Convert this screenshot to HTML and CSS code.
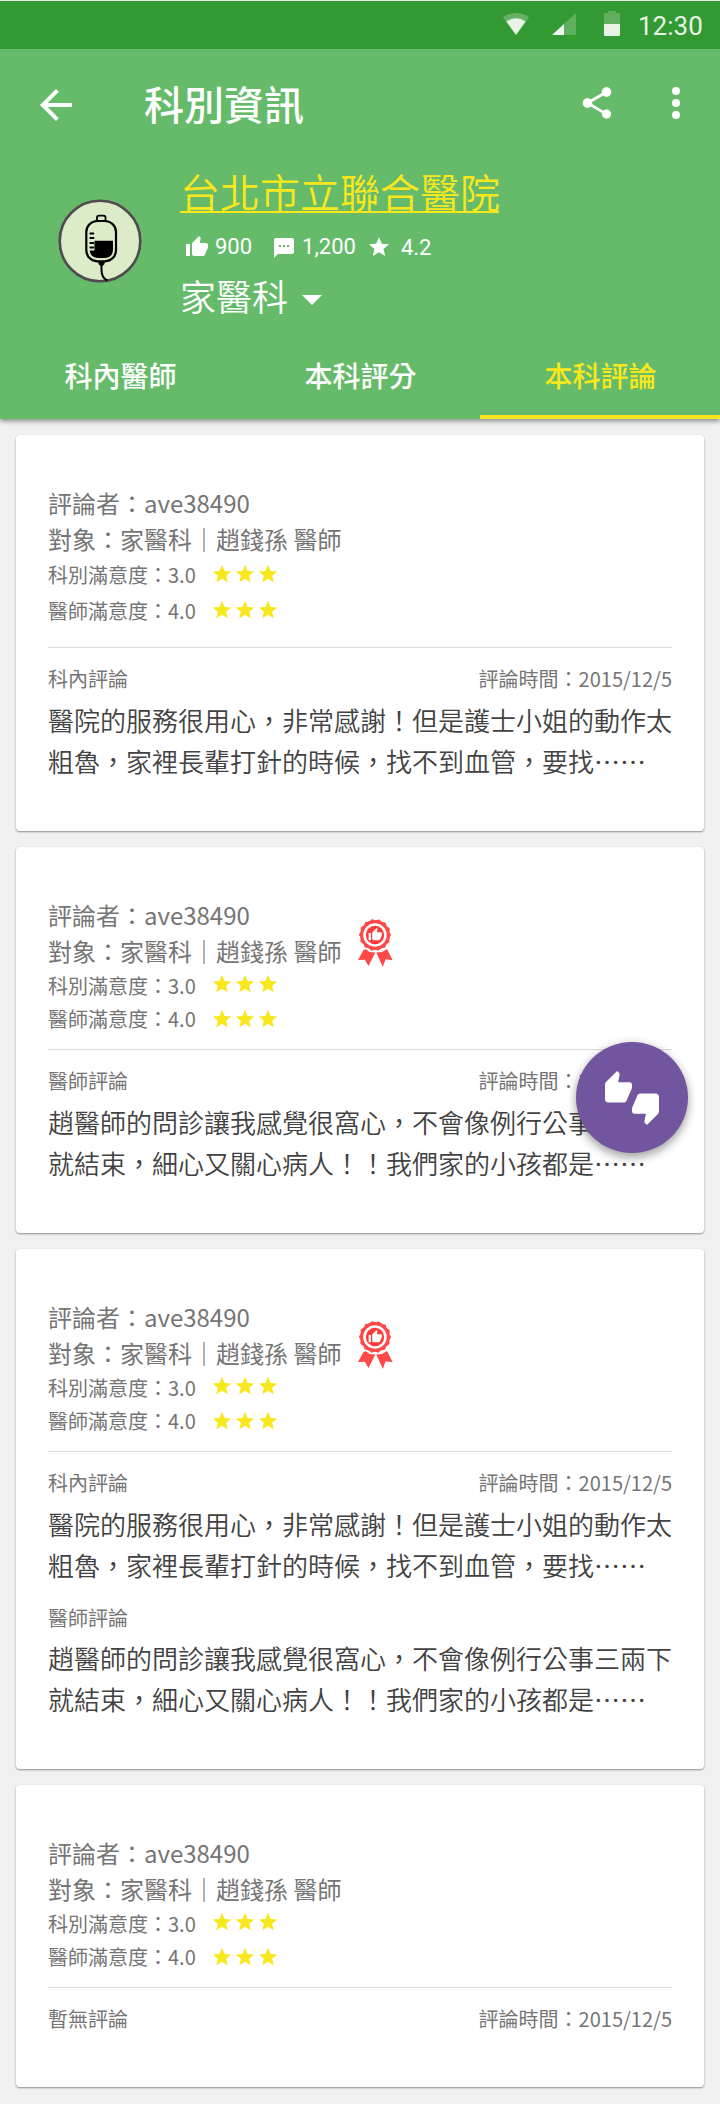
FILE: index.html
```
<!DOCTYPE html>
<html lang="zh-Hant">
<head>
<meta charset="utf-8">
<title>科別資訊</title>
<link rel="stylesheet" href="styles.css">
</head>
<body>
<svg class="defs" width="0" height="0" aria-hidden="true">
  <symbol id="star" viewBox="0 0 24 24"><path d="M12 17.27L18.18 21l-1.64-7.03L22 9.24l-7.19-.61L12 2 9.19 8.63 2 9.24l5.46 4.73L5.82 21z"/></symbol>
  <symbol id="thumb" viewBox="0 0 24 24"><path d="M1 21h4V9H1v12zm22-11c0-1.100-.9-2-2-2h-6.310l.95-4.570.030-.320c0-.410-.170-.790-.440-1.060L14.170 1 7.590 7.590C7.220 7.950 7 8.450 7 9v10c0 1.100.9 2 2 2h9c.830 0 1.540-.5 1.840-1.220l3.020-7.050c.090-.230.140-.470.140-.730v-2z"/></symbol>
  <symbol id="award" viewBox="0 0 36 50">
    <circle cx="17" cy="17" r="13.400" fill="none" stroke="#ff4848" stroke-width="3.200"/>
    <circle cx="17" cy="17" r="13.900" fill="none" stroke="#ff4848" stroke-width="4.200" stroke-linecap="round" stroke-dasharray="0 6.238"/>
    <circle cx="17" cy="17" r="9.200" fill="#ff3838"/>
    <path fill="#ff4848" d="M5.500 32L8 31.300 11.500 34 17.300 34.500 10.500 48 6.800 41.700 0 42zM18.300 34.500L24 34 29 31 34.700 42.300 27.600 41.300 24.800 49z"/>
    <svg x="10" y="9.500" width="14.500" height="14.500" viewBox="0 0 24 24"><use href="#thumb" fill="#fff"/></svg>
  </symbol>
</svg>

<header class="header">
  <div class="status">
    <svg class="wifi" viewBox="0 0 26 22"><path fill="#fff" opacity=".25" d="M0 4Q13-4 26 4L13 22z"/><path fill="#fff" opacity=".85" d="M3.300 8.500Q13 2 22.700 8.500L13 22z"/></svg>
    <svg class="signal" viewBox="0 0 24 22"><path fill="#fff" opacity=".22" d="M24 0V22H0z"/><path fill="#fff" opacity=".88" d="M12 11V22H0z"/></svg>
    <svg class="battery" viewBox="0 0 16 25"><path fill="#fff" opacity=".22" d="M4 0h8v2h3q1 0 1 1v10H0V3q0-1 1-1h3z"/><path fill="#fff" opacity=".88" d="M0 13h16v10.500q0 1.500-1.500 1.500h-13Q0 25 0 23.500z"/></svg>
    <span class="clock">12:30</span>
  </div>
  <div class="toolbar">
    <svg class="back" viewBox="0 0 24 24"><path d="M20 11H7.830l5.590-5.590L12 4l-8 8 8 8 1.410-1.410L7.830 13H20z"/></svg>
    <h1 class="title">科別資訊</h1>
    <svg class="share" viewBox="0 0 24 24"><path d="M18 16.080c-.760 0-1.440.3-1.960.770L8.910 12.700c.050-.230.090-.460.090-.7s-.040-.470-.090-.7l7.050-4.110c.540.5 1.250.810 2.040.810 1.660 0 3-1.340 3-3s-1.340-3-3-3-3 1.340-3 3c0 .240.040.470.090.7L8.040 9.810C7.500 9.310 6.790 9 6 9c-1.660 0-3 1.340-3 3s1.340 3 3 3c.790 0 1.500-.310 2.040-.810l7.120 4.160c-.050.210-.080.430-.080.650 0 1.610 1.310 2.920 2.920 2.920s2.920-1.310 2.920-2.920-1.310-2.920-2.920-2.920z"/></svg>
    <svg class="more" viewBox="0 0 8 32"><circle cx="4" cy="4" r="4"/><circle cx="4" cy="16" r="4"/><circle cx="4" cy="28" r="4"/></svg>
  </div>
  <div class="profile">
    <svg class="avatar" viewBox="0 0 84 84">
      <circle cx="42" cy="42" r="40.300" fill="#dcebc8" stroke="#504b50" stroke-width="2.600"/>
      <g fill="none" stroke="#000">
        <path stroke-width="1.800" d="M39 21.500v-3q0-1.800 2-1.800h4.500q2 0 2 1.800v3"/>
        <rect x="28.300" y="22" width="29.700" height="40.300" rx="11" stroke-width="2.200"/>
        <path stroke-width="2" stroke-linecap="round" d="M32.300 34.400h3M32.300 39h3.200M32.300 44h3.200M32.300 48.600h3"/>
        <path stroke-width="2" d="M43.500 64v7q0 8 6 10.500"/>
      </g>
      <path fill="#000" d="M36.500 41.700H55V50q0 9-9 9h-5q-8.500 0-9.300-7.500h4.800zM40.500 62h6v3l-2 2h-2l-2-2z"/>
    </svg>
    <div class="info">
      <a class="hospital">台北市立聯合醫院</a>
      <div class="stats">
        <span class="stat"><svg class="stat-icon" viewBox="0 0 24 24"><use href="#thumb"/></svg>900</span>
        <span class="stat stat-comments"><svg class="stat-icon comment" viewBox="0 0 24 24"><path d="M20 2H4c-1.100 0-2 .9-2 2v18l4-4h14c1.100 0 2-.9 2-2V4c0-1.100-.9-2-2-2zM9 11H7V9h2v2zm4 0h-2V9h2v2zm4 0h-2V9h2v2z"/></svg>1,200</span>
        <span class="stat stat-score"><svg class="stat-icon" viewBox="0 0 24 24"><use href="#star"/></svg><span class="score">4.2</span></span>
      </div>
      <div class="dept">家醫科<svg class="caret" viewBox="0 0 20 10"><path d="M0 0h20L10 10z"/></svg></div>
    </div>
  </div>
  <nav class="tabs">
    <a class="tab">科內醫師</a>
    <a class="tab">本科評分</a>
    <a class="tab active">本科評論</a>
  </nav>
</header>

<main class="list">
  <article class="card roomy">
    <div class="who">評論者：ave38490</div>
    <div class="who">對象：家醫科｜趙錢孫 醫師</div>
    <div class="rate">科別滿意度：3.0<span class="stars"><svg><use href="#star"/></svg><svg><use href="#star"/></svg><svg><use href="#star"/></svg></span></div>
    <div class="rate">醫師滿意度：4.0<span class="stars"><svg><use href="#star"/></svg><svg><use href="#star"/></svg><svg><use href="#star"/></svg></span></div>
    <div class="meta"><span>科內評論</span><span>評論時間：2015/12/5</span></div>
    <p class="text">醫院的服務很用心，非常感謝！但是護士小姐的動作太<br>粗魯，家裡長輩打針的時候，找不到血管，要找⋯⋯</p>
  </article>

  <article class="card">
    <div class="who">評論者：ave38490</div>
    <div class="who">對象：家醫科｜趙錢孫 醫師<svg class="award"><use href="#award"/></svg></div>
    <div class="rate">科別滿意度：3.0<span class="stars raised"><svg><use href="#star"/></svg><svg><use href="#star"/></svg><svg><use href="#star"/></svg></span></div>
    <div class="rate">醫師滿意度：4.0<span class="stars"><svg><use href="#star"/></svg><svg><use href="#star"/></svg><svg><use href="#star"/></svg></span></div>
    <div class="meta"><span>醫師評論</span><span>評論時間：2015/12/5</span></div>
    <p class="text">趙醫師的問診讓我感覺很窩心，不會像例行公事三兩下<br>就結束，細心又關心病人！！我們家的小孩都是⋯⋯</p>
  </article>

  <article class="card">
    <div class="who">評論者：ave38490</div>
    <div class="who">對象：家醫科｜趙錢孫 醫師<svg class="award"><use href="#award"/></svg></div>
    <div class="rate">科別滿意度：3.0<span class="stars raised"><svg><use href="#star"/></svg><svg><use href="#star"/></svg><svg><use href="#star"/></svg></span></div>
    <div class="rate">醫師滿意度：4.0<span class="stars"><svg><use href="#star"/></svg><svg><use href="#star"/></svg><svg><use href="#star"/></svg></span></div>
    <div class="meta"><span>科內評論</span><span>評論時間：2015/12/5</span></div>
    <p class="text">醫院的服務很用心，非常感謝！但是護士小姐的動作太<br>粗魯，家裡長輩打針的時候，找不到血管，要找⋯⋯</p>
    <div class="meta second"><span>醫師評論</span></div>
    <p class="text">趙醫師的問診讓我感覺很窩心，不會像例行公事三兩下<br>就結束，細心又關心病人！！我們家的小孩都是⋯⋯</p>
  </article>

  <article class="card empty">
    <div class="who">評論者：ave38490</div>
    <div class="who">對象：家醫科｜趙錢孫 醫師</div>
    <div class="rate">科別滿意度：3.0<span class="stars raised"><svg><use href="#star"/></svg><svg><use href="#star"/></svg><svg><use href="#star"/></svg></span></div>
    <div class="rate">醫師滿意度：4.0<span class="stars"><svg><use href="#star"/></svg><svg><use href="#star"/></svg><svg><use href="#star"/></svg></span></div>
    <div class="meta"><span>暫無評論</span><span>評論時間：2015/12/5</span></div>
  </article>
</main>

<button class="fab" aria-label="評價"><svg viewBox="0 0 24 24"><path d="M12 6c0-.550-.450-1-1-1H5.820l.660-3.180.020-.230c0-.310-.130-.590-.330-.8L5.380 0 .440 4.940C.170 5.210 0 5.590 0 6v6.500c0 .830.670 1.500 1.500 1.500h6.750c.620 0 1.150-.380 1.380-.910l2.260-5.290c.070-.170.110-.360.110-.550V6zm10.500 4h-6.750c-.620 0-1.150.380-1.380.910l-2.260 5.290c-.070.170-.110.360-.110.550V18c0 .550.450 1 1 1h5.180l-.660 3.180-.020.240c0 .310.130.590.330.8l.790.780 4.940-4.940c.270-.270.440-.650.440-1.060v-6.500c0-.830-.670-1.500-1.500-1.500z"/></svg></button>
</body>
</html>
```
FILE: styles.css
```
* { box-sizing: border-box; }
body {
  margin: 0;
  position: relative;
  width: 720px;
  height: 2104px;
  overflow: hidden;
  background: #f1f1f1;
  font-family: "Noto Sans CJK TC", "Noto Sans", sans-serif;
}
svg { display: block; flex: none; }
.defs { position: absolute; }

.header {
  position: relative;
  height: 419px;
  background: #66bb6a;
  color: #fff;
  fill: #fff;
  border-top: 1px solid #e4e8e4;
  box-shadow: 0 2px 5px rgba(0, 0, 0, .45);
}
.status {
  display: flex;
  align-items: flex-start;
  height: 48px;
  padding: 0 18px 0 503px;
  background: #339933;
}
.wifi { width: 26px; height: 22px; margin-top: 12px; }
.signal { width: 24px; height: 22px; margin: 12px 0 0 23px; }
.battery { width: 16px; height: 25px; margin: 10px 0 0 28px; }
.clock {
  margin-left: 18px;
  font: 400 26px/50px Roboto, sans-serif;
  color: #e6f3e6;
}
.toolbar {
  display: flex;
  align-items: center;
  height: 112px;
  padding: 0 40px 0 32px;
}
.back { width: 48px; height: 48px; }
.title { margin: 0 auto 4px 64px; font-size: 40px; font-weight: 500; line-height: 60px; }
.share { width: 38px; height: 38px; margin-right: 56px; margin-top: -4px; }
.more { width: 8px; height: 32px; margin-top: -4px; }

.profile { display: flex; height: 170px; padding-left: 58px; }
.avatar { width: 84px; height: 84px; margin-top: 38px; }
.info { margin-left: 38px; }
.hospital {
  display: block;
  width: 319px;
  height: 52px;
  border-bottom: 2px solid #f8e71c;
  font-size: 40px;
  font-weight: 350;
  line-height: 60px;
  color: #f8e71c;
  white-space: nowrap;
}
.stats {
  display: flex;
  align-items: center;
  height: 67px;
  padding-left: 5px;
  font: 400 22px/26px Roboto, sans-serif;
}
.stat { display: flex; align-items: center; }
.stat-icon { width: 24px; height: 24px; margin-right: 6px; }
.comment { margin-top: 3px; }
.stat-comments { margin-left: 20px; }
.stat-score { margin-left: 11px; }
.score { padding: 2px 0 0 4px; }
.dept {
  display: flex;
  align-items: center;
  height: 30px;
  font-size: 36px;
  font-weight: 350;
}
.caret { width: 20px; height: 10px; margin: 10px 0 0 14px; }

.tabs { display: grid; grid-template: 88px / repeat(3, 1fr); }
.tab {
  height: 88px;
  padding-left: 1px;
  text-align: center;
  font-size: 28px;
  font-weight: 500;
  line-height: 88px;
}
.active { color: #f8e71c; border-bottom: 4px solid #f8e71c; }

.list { display: flex; flex-direction: column; gap: 16px; padding: 16px; }
.card {
  height: 386px;
  padding: 50px 32px 0;
  border-radius: 4px;
  background: #fff;
  color: #757575;
  box-shadow: 0 1px 2px rgba(0, 0, 0, .42);
}
.card.roomy { height: 396px; }
.card:nth-child(3) { height: 520px; }
.card.empty { height: 302px; }
.who {
  display: flex;
  height: 36px;
  font-size: 24px;
  font-weight: 400;
  line-height: 36px;
  white-space: pre;
}
.award { width: 36px; height: 50px; margin: -15px 0 0 17px; }
.rate {
  display: flex;
  align-items: center;
  height: 33px;
  font-size: 20px;
  font-weight: 400;
}
.roomy .rate { height: 36px; margin-top: -1px; margin-bottom: 1px; }
.stars { display: flex; gap: 1px; margin-left: 15px; fill: #f8e71c; }
.stars svg { width: 22px; height: 22px; }
.raised { margin-top: -3px; }
.meta {
  display: flex;
  justify-content: space-between;
  align-items: center;
  height: 50px;
  margin-top: 14px;
  padding-top: 12px;
  border-top: 1px solid #dcdcdc;
  font-size: 20px;
  font-weight: 400;
}
.roomy .meta { margin-top: 19px; }
.meta.second { height: 40px; margin-top: 12px; padding: 0; border: 0; }
.text {
  margin: 2px 0 0;
  font-size: 26px;
  font-weight: 350;
  line-height: 41px;
  color: #424242;
  white-space: nowrap;
}
.meta.second + .text { margin-top: 0; }
.fab {
  position: absolute;
  left: 576px;
  top: 1042px;
  display: grid;
  place-items: center;
  width: 112px;
  height: 111px;
  padding: 0;
  border: 0;
  border-radius: 50%;
  background: #71559f;
  box-shadow: 0 5px 10px rgba(0, 0, 0, .3), 0 0 8px rgba(0, 0, 0, .12);
}
.fab svg { width: 54px; height: 54px; fill: #fff; }
```
